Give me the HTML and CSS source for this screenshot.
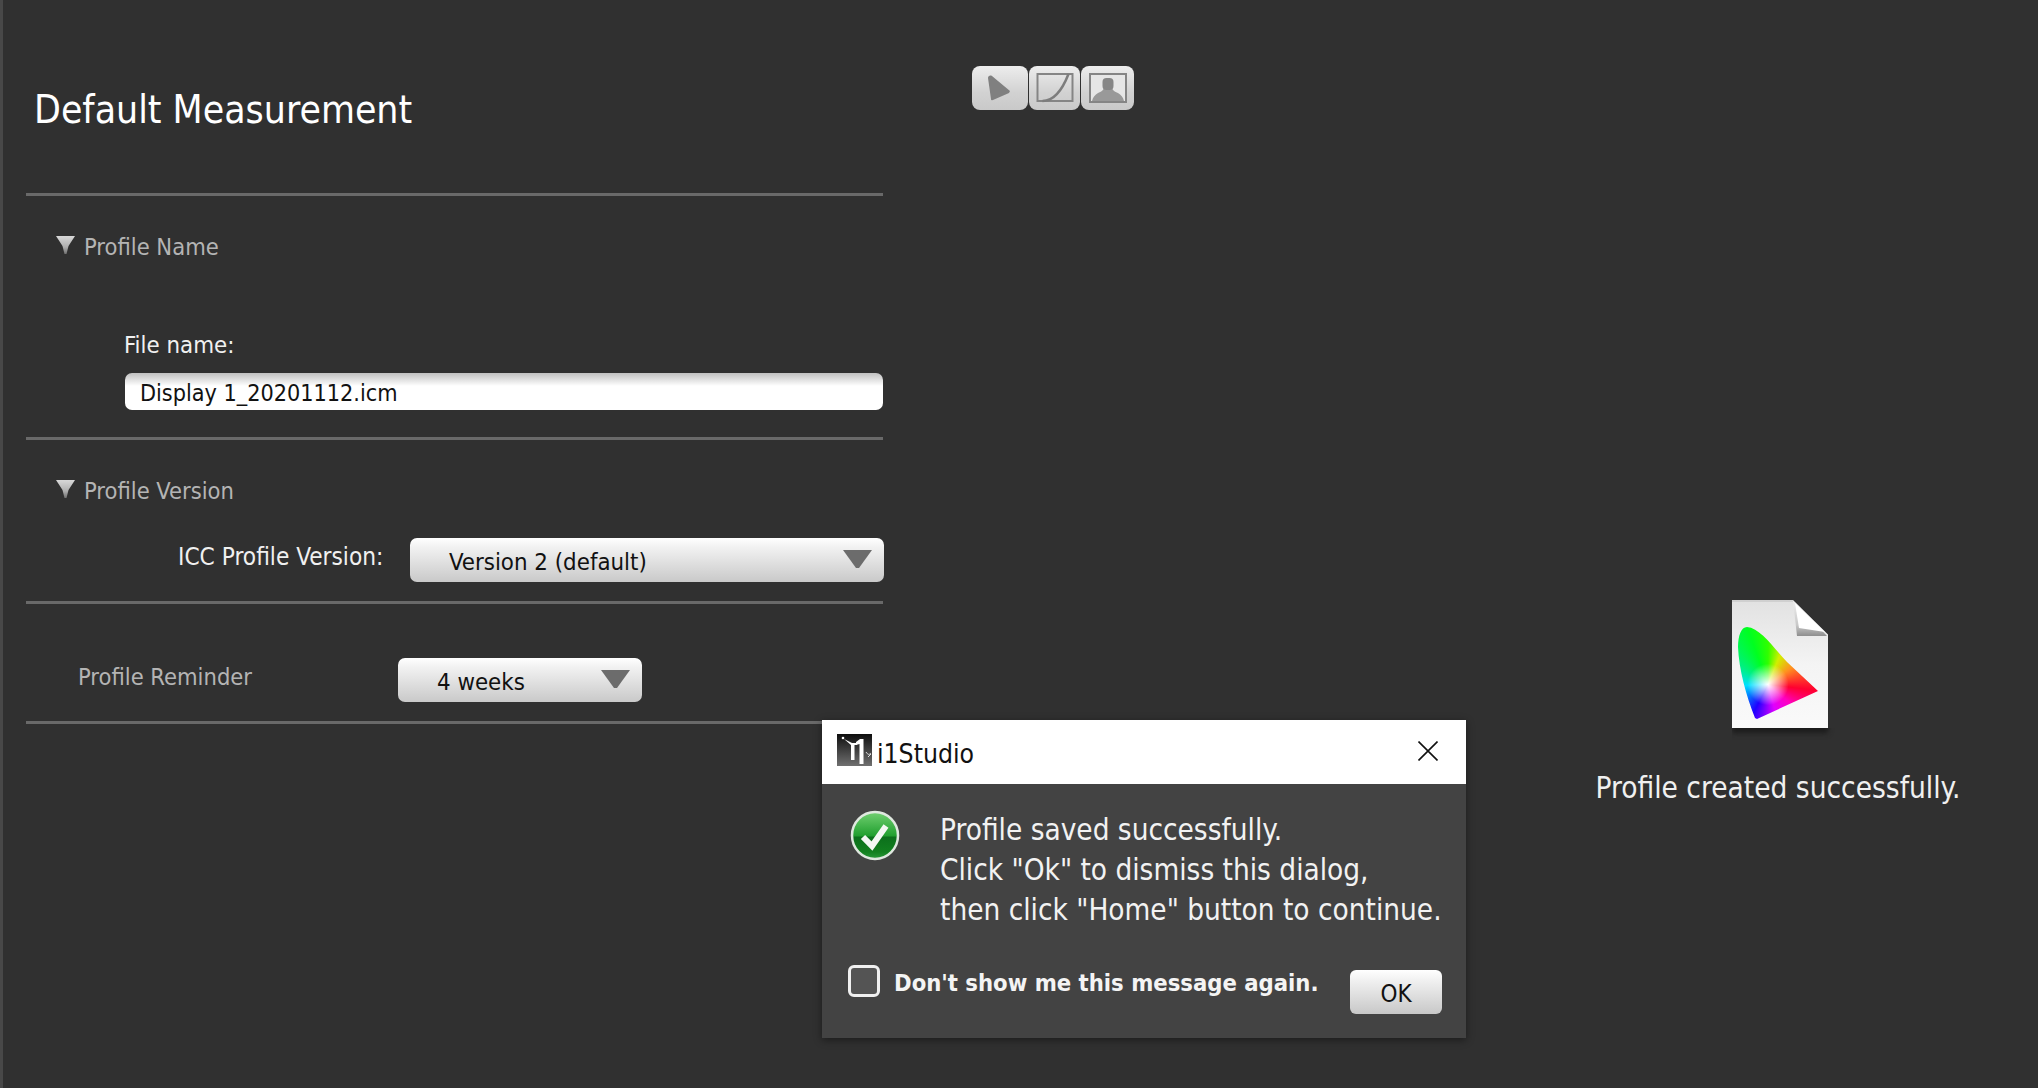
FILE: index.html
```html
<!DOCTYPE html>
<html lang="en">
<head>
<meta charset="utf-8">
<title>i1Studio</title>
<link rel="stylesheet" href="styles.css">
</head>
<body>
<div class="app">
  <main class="panel">
    <header class="panel-head"><h1 class="title">Default Measurement</h1></header>

    <section class="sec sec-name">
      <div class="sec-head">
        <svg class="disc" viewBox="0 0 19 18"><defs><linearGradient id="dg1" x1="0" y1="0" x2="0" y2="1"><stop offset="0" stop-color="#d8d8d8"/><stop offset=".6" stop-color="#b0b0b0"/><stop offset="1" stop-color="#707070"/></linearGradient></defs><path d="M0 0H19L12.5 10L10.5 18H8.5L6.5 10Z" fill="url(#dg1)"/></svg>
        <span class="sec-label">Profile Name</span>
      </div>
      <label class="file-label">File name:</label>
      <div class="input">Display 1_20201112.icm</div>
    </section>

    <section class="sec sec-version">
      <div class="sec-head">
        <svg class="disc" viewBox="0 0 19 18"><path d="M0 0H19L12.5 10L10.5 18H8.5L6.5 10Z" fill="url(#dg1)"/></svg>
        <span class="sec-label">Profile Version</span>
      </div>
      <div class="row-icc">
        <span class="icc-label">ICC Profile Version:</span>
        <div class="select select-wide"><span class="select-text">Version 2 (default)</span>
          <svg class="caret" viewBox="0 0 29 18"><path d="M0 0H29L16 18H13Z" fill="#6c6c6c"/></svg></div>
      </div>
    </section>

    <section class="sec sec-reminder">
      <span class="sec-label rem-label">Profile Reminder</span>
      <div class="select select-small"><span class="select-text">4 weeks</span>
        <svg class="caret" viewBox="0 0 29 18"><path d="M0 0H29L16 18H13Z" fill="#6c6c6c"/></svg></div>
    </section>
  </main>

  <nav class="tools">
    <button class="tool t1"><svg viewBox="0 0 24 26" class="tool-ico"><path d="M1 3C1 1 3 0 5 1L23 16L22 18L6 25C4 25.500 4 25 4 24Z" fill="#808080"/></svg></button>
    <button class="tool t2"><svg viewBox="0 0 37 30" class="tool-ico ico2"><rect x="1" y="1" width="35" height="27" fill="none" stroke="#858585" stroke-width="2"/><path d="M6 28C17 28 25 19 32 1" fill="none" stroke="#7d7d7d" stroke-width="2.500"/></svg></button>
    <button class="tool t3"><svg viewBox="0 0 38 30" class="tool-ico ico2"><rect x="1" y="1" width="36" height="28" fill="#e6e6e6" stroke="#858585" stroke-width="2"/><path d="M15 14C15 17 12 19 9 20 6 22 4 24 3 28H35C34 24 32 22 29 20 26 19 23 17 23 14Z" fill="#999"/><rect x="13.500" y="5" width="11" height="12" rx="4" fill="#868686"/></svg></button>
  </nav>

  <aside class="result">
    <div class="doc">
      <div class="gamut"></div>
      <svg class="fold" viewBox="0 0 36 40"><defs><linearGradient id="fs" x1="0" y1="0" x2="0" y2="1"><stop offset="0" stop-color="#f0f0f0"/><stop offset=".7" stop-color="#c8c8c8"/><stop offset="1" stop-color="#8e8e8e"/></linearGradient></defs><path d="M1 0L35 36H5Z" fill="url(#fs)"/><path d="M3 3L33 32L7 28Z" fill="#fff"/></svg>
    </div>
    <p class="result-text">Profile created successfully.</p>
  </aside>
</div>

<div class="dialog">
  <div class="dlg-title">
    <svg class="logo" viewBox="0 0 35 32"><defs><linearGradient id="lg" x1="0" y1="0" x2="0" y2="1"><stop offset="0" stop-color="#0e0e0e"/><stop offset="1" stop-color="#707070"/></linearGradient></defs><rect width="35" height="32" fill="url(#lg)"/><g fill="#fff"><circle cx="6" cy="4" r="1.300"/><path d="M7 5L15 9H20V11H17.500V26H14V11Z"/><path d="M22.500 10L19 11V8L23 5H26.500V30H22.500Z"/></g><path d="M29 18C31 21 32 21 34 19M31 23L34 20" stroke="#ddd" stroke-width="1" fill="none"/></svg>
    <span class="dlg-name">i1Studio</span>
    <svg class="close" viewBox="0 0 20 20"><path d="M.5 .5L19.500 19.500M19.500 .5L.5 19.500" stroke="#111" stroke-width="1.600" fill="none"/></svg>
  </div>
  <div class="dlg-body">
    <div class="dlg-msg">
      <svg class="ok-ico" viewBox="0 0 50 52"><defs><linearGradient id="og" x1="0" y1="0" x2="0" y2="1"><stop offset="0" stop-color="#72d072"/><stop offset=".5" stop-color="#22a030"/><stop offset=".54" stop-color="#0c701c"/><stop offset=".85" stop-color="#12801f"/><stop offset="1" stop-color="#2a9a3a"/></linearGradient></defs><ellipse cx="25" cy="25.500" rx="23" ry="23.500" fill="url(#og)" stroke="#dfe8df" stroke-width="2.500"/><path d="M13 27L22 36L36 16" fill="none" stroke="#f4f8f4" stroke-width="6"/></svg>
      <p class="msg-text">Profile saved successfully.<br>Click "Ok" to dismiss this dialog,<br>then click "Home" button to continue.</p>
    </div>
    <div class="dlg-foot">
      <span class="check"></span>
      <span class="check-label">Don't show me this message again.</span>
      <button class="ok">OK</button>
    </div>
  </div>
</div>
</body>
</html>
```
FILE: styles.css
```css
* { box-sizing: border-box; }
html, body { margin: 0; height: 100%; overflow: hidden; background: #303030; }
body { font-family: "DejaVu Sans Condensed", "DejaVu Sans", sans-serif; font-stretch: condensed; position: relative; }
p, h1 { margin: 0; }

.app { display: flex; height: 1088px; border-left: 3px solid #484848; background: #303030; }

.panel { width: 857px; margin-left: 23px; flex: none; }
.panel-head { height: 196px; padding-top: 85px; border-bottom: 3px solid #696969; }
.title { font-size: 38.800px; line-height: 50px; font-weight: 400; color: #fff; margin-left: 8px; }

.sec { border-bottom: 3px solid #696969; }
.sec-name { height: 244px; padding-top: 36px; }
.sec-version { height: 164px; padding-top: 36px; }
.sec-reminder { height: 120px; padding-top: 54px; display: flex; width: 100%; }

.sec-head { display: flex; align-items: flex-start; height: 30px; padding-left: 30px; }
.disc { width: 19px; height: 18px; margin-top: 4px; flex: none; filter: blur(.4px); }
.sec-label { font-size: 23.500px; line-height: 30px; color: #b4b4b4; margin-left: 9px; }

.file-label { display: block; font-size: 23.800px; line-height: 30px; color: #f0f0f0; margin: 68px 0 0 98px; }
.input { height: 37px; margin: 13px 0 0 99px; width: 758px; border-radius: 7px; background: linear-gradient(#c0c0c0, #fff 35%, #fff); color: #111; font-size: 23.200px; line-height: 40px; padding-left: 15px; }

.row-icc { display: flex; margin-top: 32px; }
.icc-label { font-size: 24.200px; line-height: 38px; color: #f0f0f0; width: 205px; margin-left: 152px; flex: none; white-space: nowrap; }
.select { position: relative; height: 44px; border-radius: 7px; background: linear-gradient(#fff, #f2f2f2 20%, #c9c9c9); color: #111; font-size: 23.800px; line-height: 48px; padding-left: 39px; flex: none; }
.select-wide { width: 474px; margin-left: 27px; }
.select-small { width: 244px; margin-left: 145px; }
.rem-label { width: 175px; margin-left: 52px; flex: none; line-height: 38px; }
.caret { position: absolute; right: 12px; top: 12px; width: 29px; height: 18px; }

.tools { display: flex; gap: 1px; margin: 66px 0 0 89px; height: 44px; flex: none; }
.tool { height: 44px; padding: 0; border: 0; border-radius: 8px; background: linear-gradient(#ededed, #d2d2d2 60%, #c9c9c9); display: flex; align-items: center; justify-content: center; }
.t1 { width: 56px; }
.t2 { width: 51px; }
.t3 { width: 53px; }
.tool-ico { width: 24px; height: 26px; margin-right: 2px; filter: blur(.4px); }
.ico2 { width: 38px; height: 30px; margin: 0; }

.result { margin-left: 463px; padding-top: 600px; flex: none; width: 362px; display: flex; flex-direction: column; align-items: center; }
.doc { position: relative; width: 96px; height: 128px; margin-left: 4px; background: linear-gradient(#e2e2e2, #f4f4f4 50%, #fafafa); border-top: 2px solid #d0d0d0; box-shadow: 0 5px 5px #1c1c1c; clip-path: polygon(0 0, 63.500% 0, 100% 27%, 100% 100%, 112% 100%, 112% 112%, 0 112%); }
.fold { position: absolute; left: 60px; top: -2px; width: 36px; height: 40px; }
.gamut { position: absolute; left: 0; top: -2px; width: 96px; height: 128px; background: radial-gradient(circle at 37.500% 66%, #fff 0, rgba(255,255,255,0) 20%), conic-gradient(from 0deg at 37.500% 66%, #30ff00 0deg, #d0f000 22deg, #ff9020 55deg, #ff0030 97deg, #ff00c0 130deg, #e000ff 165deg, #2000ff 207deg, #0090ff 245deg, #00e0ff 268deg, #00f080 305deg, #00ff20 340deg, #30ff00 360deg); clip-path: path("M6 47C6 36 9 27 15 27C28 28 40 46 55 62L86 91L25 119L23 118C14 95 7 70 6 47Z"); }
.result-text { margin-top: 42px; font-size: 29.500px; line-height: 36px; color: #f0f0f0; white-space: nowrap; }

.dialog { position: absolute; left: 822px; top: 720px; width: 644px; height: 318px; box-shadow: 0 2px 8px rgba(0,0,0,.45); }
.dlg-title { height: 64px; background: #fff; display: flex; align-items: center; padding-left: 15px; position: relative; }
.logo { width: 35px; height: 32px; flex: none; margin-top: -4px; }
.dlg-name { font-size: 26.300px; color: #111; margin-left: 5px; line-height: 30px; margin-top: 4px; }
.close { position: absolute; left: 596px; top: 21px; width: 20px; height: 20px; }
.dlg-body { height: 254px; background: #434343; padding: 26px 0 0 28px; }
.dlg-msg { display: flex; align-items: flex-start; }
.ok-ico { width: 50px; height: 52px; flex: none; }
.msg-text { font-size: 29.450px; line-height: 40px; color: #f2f2f2; margin-left: 40px; white-space: nowrap; }
.dlg-foot { display: flex; align-items: flex-start; margin-top: 35px; }
.check { width: 32px; height: 32px; border: 3px solid #f0f0f0; border-radius: 6px; background: #545454; flex: none; margin-left: -2px; }
.check-label { font-size: 23.600px; line-height: 36px; font-weight: 700; color: #f4f4f4; margin-left: 14px; white-space: nowrap; width: 456px; flex: none; }
.ok { width: 92px; height: 44px; margin-top: 5px; border: 0; border-radius: 6px; padding: 4px 0 0; background: linear-gradient(#fff, #f0f0f0 25%, #c8c8c8); color: #111; font: inherit; font-size: 24px; }
```
